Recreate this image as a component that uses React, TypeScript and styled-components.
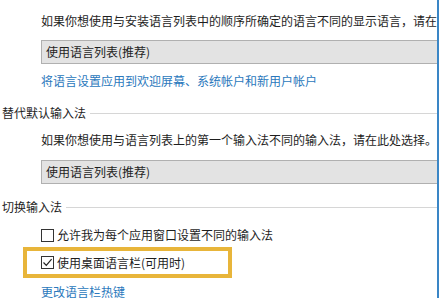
import React from "react";
import styled, { createGlobalStyle } from "styled-components";

const Global = createGlobalStyle`
  html, body { margin: 0; padding: 0; background: #ffffff; }
  body {
    font-family: "Microsoft YaHei", "Noto Sans CJK SC", "Noto Sans", sans-serif;
    font-size: 12px;
    color: #1e1e1e;
  }
`;

const Window = styled.div`
  width: 437px;
  height: 298px;
  border-right: 2px solid #3a86c6;
  overflow: hidden;
  background: #ffffff;
  box-sizing: content-box;
`;

const Indent = styled.div`
  padding-left: 41px;
  display: flex;
  flex-direction: column;
`;

const Text = styled.div<{ $top: number }>`
  margin-top: ${(p) => p.$top}px;
  line-height: 16px;
  white-space: nowrap;
`;

const Link = styled.div<{ $top: number }>`
  margin-top: ${(p) => p.$top}px;
  line-height: 16px;
  color: #2a78bc;
  white-space: nowrap;
`;

const Select = styled.div<{ $top: number }>`
  margin-top: ${(p) => p.$top}px;
  height: 22px;
  border: 1px solid #b0b0b0;
  border-right: none;
  background: #e3e3e3;
  display: flex;
  align-items: center;
  padding-left: 4px;
  line-height: 16px;
  white-space: nowrap;
`;

const Heading = styled.div<{ $top: number }>`
  margin-top: ${(p) => p.$top}px;
  padding-left: 2px;
  display: flex;
  align-items: center;
  gap: 4px;
  line-height: 16px;
  white-space: nowrap;
  &::after {
    content: "";
    flex: 1;
    height: 1px;
    background: #d6d6d6;
  }
`;

const Options = styled.div`
  padding-left: 23px;
  display: flex;
  flex-direction: column;
  align-items: flex-start;
`;

const Row = styled.label<{ $top: number; $highlight?: boolean }>`
  margin-top: ${(p) => p.$top}px;
  display: flex;
  align-items: center;
  gap: 3px;
  line-height: 16px;
  white-space: nowrap;
  box-sizing: border-box;
  padding-left: ${(p) => (p.$highlight ? 14 : 18)}px;
  ${(p) =>
    p.$highlight
      ? `border: 4px solid #e8b53a; width: 209px; height: 31px;`
      : `height: 16px;`}
`;

const Box = styled.span`
  width: 13px;
  height: 13px;
  box-sizing: border-box;
  border: 1px solid #333333;
  background: #ffffff;
  display: flex;
  align-items: center;
  justify-content: center;
`;

const Check = () => (
  <svg width="11" height="11" viewBox="0 0 11 11">
    <path d="M1.5 5.5 L4.3 8.3 L9.6 2.2" fill="none" stroke="#222" strokeWidth="1.2" />
  </svg>
);

export default function App() {
  return (
    <>
      <Global />
      <Window>
        <Indent>
          <Text $top={13}>如果你想使用与安装语言列表中的顺序所确定的语言不同的显示语言，请在此处选择。</Text>
          <Select $top={11}>使用语言列表(推荐)</Select>
          <Link $top={9}>将语言设置应用到欢迎屏幕、系统帐户和新用户帐户</Link>
        </Indent>
        <Heading $top={16}>替代默认输入法</Heading>
        <Indent>
          <Text $top={11}>如果你想使用与语言列表上的第一个输入法不同的输入法，请在此处选择。</Text>
          <Select $top={12}>使用语言列表(推荐)</Select>
        </Indent>
        <Heading $top={15}>切换输入法</Heading>
        <Options>
          <Row $top={12}>
            <Box />
            允许我为每个应用窗口设置不同的输入法
          </Row>
          <Row $top={4} $highlight>
            <Box>
              <Check />
            </Box>
            使用桌面语言栏(可用时)
          </Row>
        </Options>
        <Indent>
          <Link $top={6}>更改语言栏热键</Link>
        </Indent>
      </Window>
    </>
  );
}
